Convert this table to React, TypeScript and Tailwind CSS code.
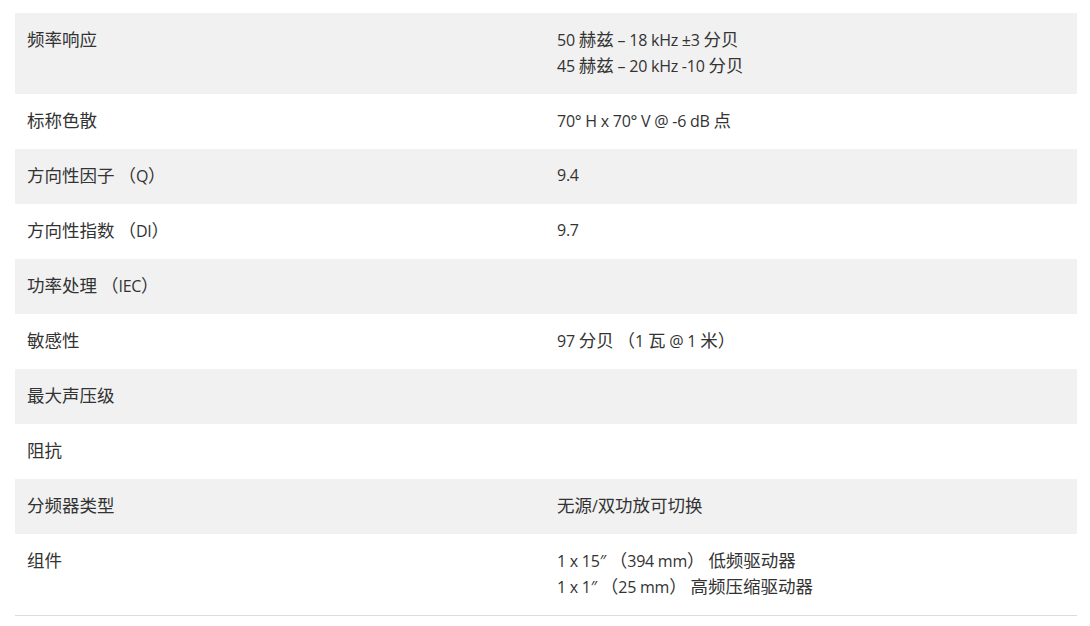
import React from "react";

const rows: [string, string[]][] = [
  ["频率响应", ["50 赫兹 – 18 kHz ±3 分贝", "45 赫兹 – 20 kHz -10 分贝"]],
  ["标称色散", ["70° H x 70° V @ -6 dB 点"]],
  ["方向性因子 （Q）", ["9.4"]],
  ["方向性指数 （DI）", ["9.7"]],
  ["功率处理 （IEC）", [""]],
  ["敏感性", ["97 分贝 （1 瓦 @ 1 米）"]],
  ["最大声压级", [""]],
  ["阻抗", [""]],
  ["分频器类型", ["无源/双功放可切换"]],
  ["组件", ["1 x 15″ （394 mm） 低频驱动器", "1 x 1″ （25 mm） 高频压缩驱动器"]],
];

function Mixed({ text }: { text: string }) {
  const parts = text.match(/[\u3000-\u9fff\uff00-\uffef]+|[^\u3000-\u9fff\uff00-\uffef]+/g) || [];
  return (
    <>
      {parts.map((p, i) =>
        /[\u3000-\u9fff\uff00-\uffef]/.test(p) ? (
          <span key={i} className="text-[17.5px] leading-[26px]">{p}</span>
        ) : (
          <span key={i} className="text-[16px] leading-[26px] tracking-[-0.25px]">{p}</span>
        )
      )}
    </>
  );
}

export default function App() {
  return (
    <div
      className="w-[1090px] h-[626px] bg-white pt-[13px] pl-[15px] text-[#333] text-[16px] leading-[26px]"
      style={{ fontFamily: '"Open Sans", "Noto Sans CJK SC", sans-serif' }}
    >
      <div className="w-[1062px] border-b border-[#dcdcdc]">
        {rows.map(([k, v], i) => (
          <div
            key={i}
            className={`flex pt-[13px] pb-[16px] ${i % 2 === 0 ? "bg-[#f1f1f1]" : "bg-white"}`}
          >
            <div className="w-[530px] pl-[12px] h-[26px]"><Mixed text={k} /></div>
            <div className="flex-1 pl-[12px]">
              {v.map((line, j) => (
                <div key={j} className="h-[26px]"><Mixed text={line} /></div>
              ))}
            </div>
          </div>
        ))}
      </div>
    </div>
  );
}
